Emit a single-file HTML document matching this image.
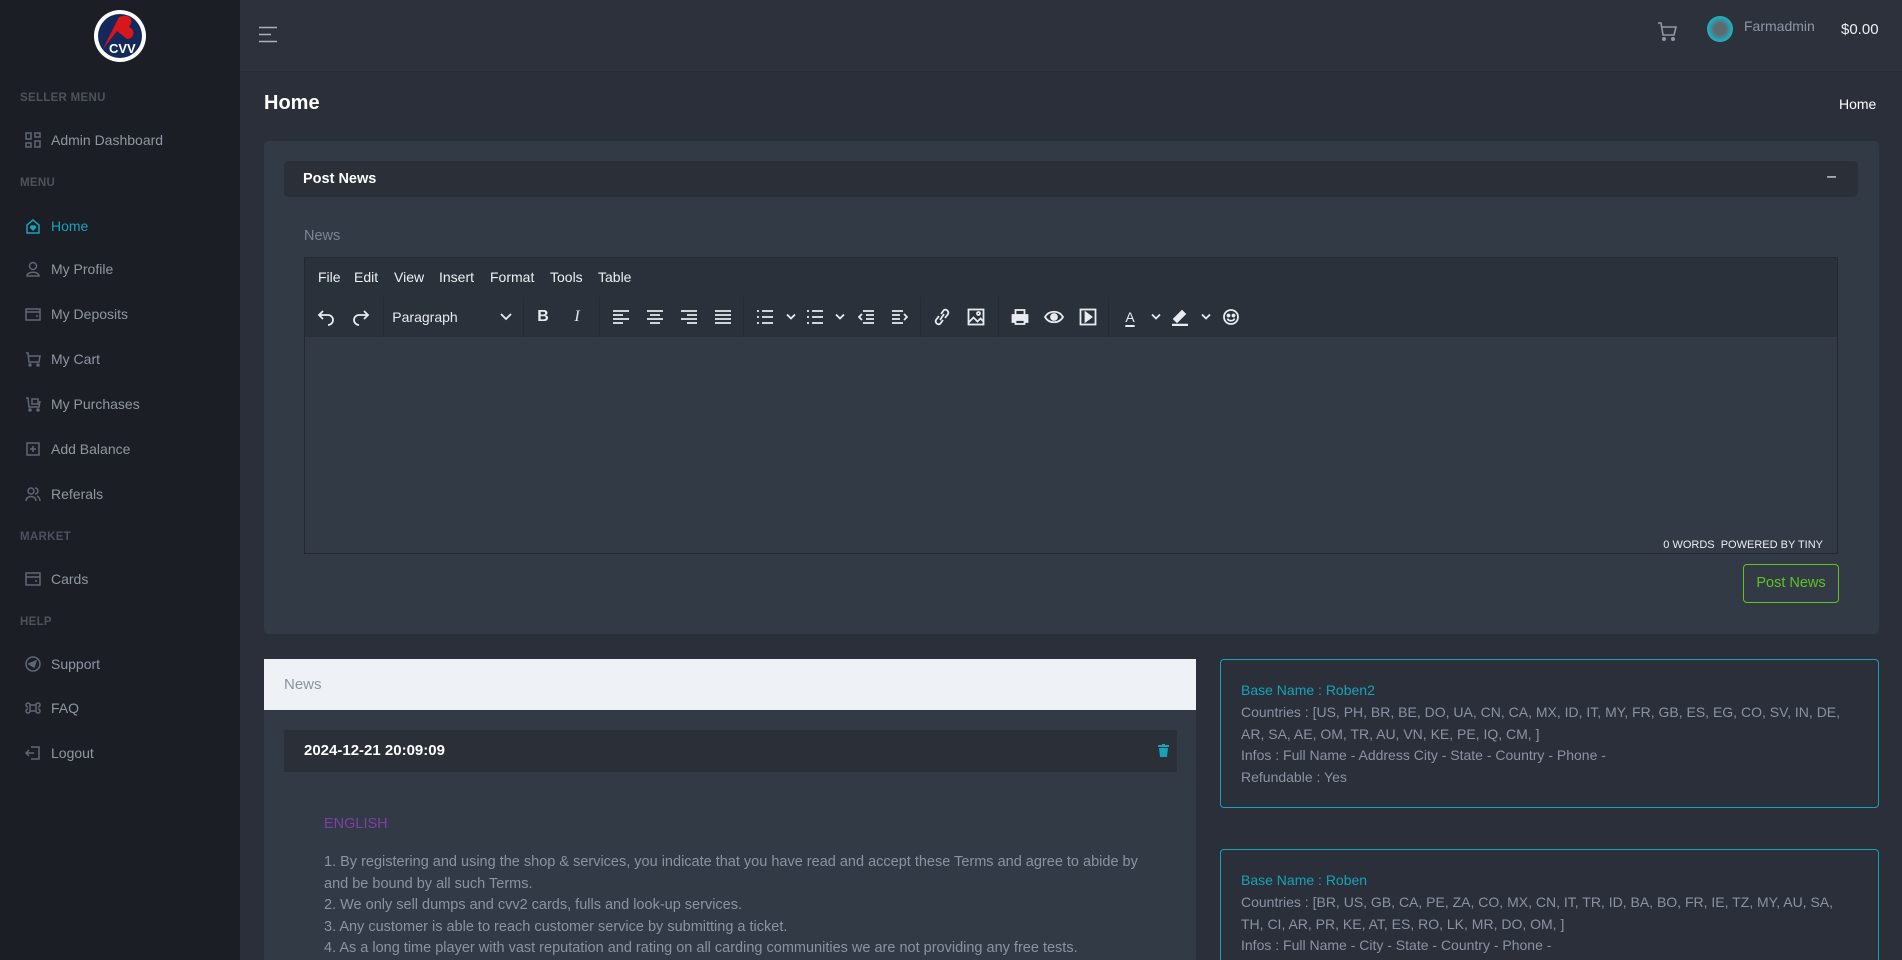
<!DOCTYPE html>
<html style="height:960px;overflow:hidden"><head><meta charset="utf-8"><style>
*{box-sizing:border-box;margin:0;padding:0}
body{width:1902px;height:960px;overflow:hidden;background:#2a2f39;font-family:"Liberation Sans",sans-serif;position:relative}
.a{position:absolute}
#sb{left:0;top:0;width:240px;height:960px;background:#1b1e25}
.lbl{position:absolute;left:20px;font-size:11.5px;font-weight:bold;color:#4c525e;letter-spacing:.3px}
.it{position:absolute;left:51px;font-size:14px;color:#8f97a6;transform:translateY(-50%)}
.ic{position:absolute;left:25px;width:16px;height:16px;transform:translateY(-50%)}
.ic svg{width:16px;height:16px;fill:none;stroke:#5f6675;stroke-width:1.5}
#hd{left:240px;top:0;width:1662px;height:71px;background:#2c313b;box-shadow:0 1px 0 #262a33}
.card{background:#323a46}
.tb span{position:absolute;top:50%;transform:translate(-50%,-50%);color:#e8ebef}
.tb svg{position:absolute;top:50%;transform:translate(-50%,-50%);fill:none;stroke:#e8ebef;stroke-width:1.8}
.sep{position:absolute;top:0;width:1px;height:40px;background:#262b33}
.txt{font-size:14.5px;color:#8a93a3;line-height:21.6px}
.bx{border:1px solid #17a2b8;border-radius:4px;padding:20px 20px;font-size:14px;line-height:21.8px;color:#8a93a3;overflow:hidden}
</style></head><body>
<div id="sb" class="a">
 <svg class="a" style="left:93px;top:9px" width="54" height="54" viewBox="0 0 54 54"><circle cx="27" cy="27" r="26" fill="#fff"/><circle cx="27" cy="27" r="22" fill="#14295a"/><path d="M10 40 L26 8 C36 4 42 10 36 18 C44 22 40 30 34 30 L24 22 Z" fill="#d8161b"/><text x="16" y="44" font-size="13" fill="#fff" font-family="Liberation Sans" font-weight="bold">CVV</text></svg>
 <div class="lbl" style="top:92px">SELLER MENU</div>
 <div class="ic" style="top:140px"><svg viewBox="0 0 16 16"><rect x="1" y="1" width="5" height="6"/><rect x="10" y="1" width="5" height="4"/><rect x="1" y="11" width="5" height="4"/><rect x="10" y="9" width="5" height="6"/></svg></div>
 <div class="it" style="top:140px">Admin Dashboard</div>
 <div class="lbl" style="top:177px">MENU</div>
 <div class="ic" style="top:226px"><svg viewBox="0 0 16 16" style="stroke:#17a2b8"><path d="M2 7 L8 2 L14 7 V15 H2 Z"/><path d="M8 12 L6 10 A1.2 1.2 0 0 1 8 8.5 A1.2 1.2 0 0 1 10 10 Z" fill="#17a2b8"/></svg></div>
 <div class="it" style="top:226px;color:#17a2b8">Home</div>
 <div class="ic" style="top:269px"><svg viewBox="0 0 16 16"><circle cx="8" cy="5" r="3.5"/><path d="M2 15 C2 10 14 10 14 15 Z"/></svg></div>
 <div class="it" style="top:269px">My Profile</div>
 <div class="ic" style="top:314px"><svg viewBox="0 0 16 16"><rect x="1" y="3" width="14" height="11"/><path d="M1 6 H15 M11 10 H13"/></svg></div>
 <div class="it" style="top:314px">My Deposits</div>
 <div class="ic" style="top:359px"><svg viewBox="0 0 16 16"><path d="M1 2 H3 L4 11 H14 L15 5 H4"/><circle cx="5" cy="14" r="1"/><circle cx="13" cy="14" r="1"/></svg></div>
 <div class="it" style="top:359px">My Cart</div>
 <div class="ic" style="top:404px"><svg viewBox="0 0 16 16"><path d="M1 2 H3 L4 11 H14 L15 5"/><rect x="7" y="3" width="6" height="5"/><circle cx="5" cy="14" r="1"/><circle cx="13" cy="14" r="1"/></svg></div>
 <div class="it" style="top:404px">My Purchases</div>
 <div class="ic" style="top:449px"><svg viewBox="0 0 16 16"><rect x="2" y="2" width="12" height="12"/><path d="M8 5 V11 M5 8 H11"/></svg></div>
 <div class="it" style="top:449px">Add Balance</div>
 <div class="ic" style="top:494px"><svg viewBox="0 0 16 16"><circle cx="6" cy="5" r="3"/><path d="M1 15 C1 9 11 9 11 15 M10 2 A3 3 0 0 1 10 8 M12 10 C14 11 15 13 15 15"/></svg></div>
 <div class="it" style="top:494px">Referals</div>
 <div class="lbl" style="top:531px">MARKET</div>
 <div class="ic" style="top:579px"><svg viewBox="0 0 16 16"><rect x="1" y="2" width="14" height="12"/><path d="M1 6 H15 M10 10 H12"/></svg></div>
 <div class="it" style="top:579px">Cards</div>
 <div class="lbl" style="top:616px">HELP</div>
 <div class="ic" style="top:664px"><svg viewBox="0 0 16 16"><circle cx="8" cy="8" r="7"/><path d="M4 8 L11 5 L9 11 Z" fill="#5f6675"/></svg></div>
 <div class="it" style="top:664px">Support</div>
 <div class="ic" style="top:708px"><svg viewBox="0 0 16 16"><path d="M5 5 H11 V11 H5 Z M5 5 A2 2 0 1 0 3 7 M11 5 A2 2 0 1 1 13 7 M5 11 A2 2 0 1 1 3 9 M11 11 A2 2 0 1 0 13 9"/></svg></div>
 <div class="it" style="top:708px">FAQ</div>
 <div class="ic" style="top:753px"><svg viewBox="0 0 16 16"><path d="M6 2 H14 V14 H6 M1 8 H9 M4 5 L1 8 L4 11"/></svg></div>
 <div class="it" style="top:753px">Logout</div>
</div>
<div id="hd" class="a">
 <svg class="a" style="left:18px;top:26px" width="20" height="17"><path d="M1 1.5 H19 M1 8.5 H13 M1 15.5 H19" stroke="#aab1bd" stroke-width="1.6"/></svg>
 <svg class="a" style="left:1416px;top:20px" width="22" height="22" viewBox="0 0 22 22" fill="none" stroke="#8f97a6" stroke-width="1.6"><path d="M2 3 H5 L7 15 H18 L20 7 H6"/><circle cx="8" cy="19" r="1.2" fill="#8f97a6"/><circle cx="17" cy="19" r="1.2" fill="#8f97a6"/></svg>
 <div class="a" style="left:1467px;top:16px;width:26px;height:26px;border-radius:50%;background:radial-gradient(circle,#5d6a6f 30%,#1bb6c7 70%,#0f3a44 100%)"></div>
 <div class="a" style="left:1504px;top:18px;font-size:14px;color:#8f97a6">Farmadmin</div>
 <div class="a" style="left:1601px;top:21px;font-size:15px;color:#eef0f3">$0.00</div>
</div>
<div class="a" style="left:264px;top:92px;font-size:20px;font-weight:bold;color:#fff">Home</div>
<div class="a" style="left:1839px;top:96px;font-size:14px;color:#fff">Home</div>

<div class="a card" style="left:264px;top:141px;width:1615px;height:493px;border-radius:5px">
 <div class="a" style="left:20px;top:20px;width:1574px;height:36px;background:#2a2f38;border-radius:5px">
  <div class="a" style="left:19px;top:10px;font-size:14.5px;font-weight:bold;color:#fff">Post News</div>
  <div class="a" style="right:22px;top:7px;font-size:16px;color:#fff">–</div>
 </div>
 <div class="a" style="left:40px;top:87px;font-size:14.5px;color:#7d8595">News</div>
 <div class="a" style="left:40px;top:116px;width:1534px;height:297px;border:1px solid #242830;background:#323a46">
  <div class="a" style="left:0;top:0;width:1532px;height:39px;background:#2b313b;font-size:14px;color:#eef0f3">
   <span class="a" style="left:13px;top:11px">File</span><span class="a" style="left:49px;top:11px">Edit</span><span class="a" style="left:89px;top:11px">View</span><span class="a" style="left:134px;top:11px">Insert</span><span class="a" style="left:185px;top:11px">Format</span><span class="a" style="left:245px;top:11px">Tools</span><span class="a" style="left:293px;top:11px">Table</span>
  </div>
  <div class="a tb" style="left:0;top:39px;width:1532px;height:40px;background:#2b313b">
   <svg style="left:21px" width="18" height="18" viewBox="0 0 18 18"><path d="M6 3 L2 7 L6 11 M2 7 H11 A5 5 0 0 1 11 17"/></svg>
   <svg style="left:56px" width="18" height="18" viewBox="0 0 18 18"><path d="M12 3 L16 7 L12 11 M16 7 H7 A5 5 0 0 0 7 17"/></svg>
   <div class="sep" style="left:78px"></div>
   <span style="left:120px;font-size:14px">Paragraph</span>
   <svg style="left:201px" width="12" height="8" viewBox="0 0 12 8"><path d="M1 1 L6 6 L11 1"/></svg>
   <div class="sep" style="left:218px"></div>
   <span style="left:238px;font-weight:bold;font-size:16px">B</span>
   <span style="left:272px;font-style:italic;font-size:16px;font-family:'Liberation Serif',serif">I</span>
   <div class="sep" style="left:294px"></div>
   <svg style="left:316px" width="16" height="14"><path d="M0 1H16M0 5H10M0 9H16M0 13H10"/></svg>
   <svg style="left:350px" width="16" height="14"><path d="M0 1H16M3 5H13M0 9H16M3 13H13"/></svg>
   <svg style="left:384px" width="16" height="14"><path d="M0 1H16M6 5H16M0 9H16M6 13H16"/></svg>
   <svg style="left:418px" width="16" height="14"><path d="M0 1H16M0 5H16M0 9H16M0 13H16"/></svg>
   <div class="sep" style="left:438px"></div>
   <svg style="left:460px" width="16" height="14"><path d="M0 1H2M5 1H16M0 7H2M5 7H16M0 13H2M5 13H16"/></svg>
   <svg style="left:486px" width="10" height="7"><path d="M1 1L5 5L9 1"/></svg>
   <svg style="left:510px" width="16" height="14"><path d="M0 1H2M5 1H16M0 7H2M5 7H16M0 13H2M5 13H16"/></svg>
   <svg style="left:535px" width="10" height="7"><path d="M1 1L5 5L9 1"/></svg>
   <svg style="left:561px" width="16" height="14"><path d="M5 1H16M8 5H16M8 9H16M5 13H16M4 4L1 7L4 10"/></svg>
   <svg style="left:595px" width="16" height="14"><path d="M0 1H11M0 5H8M0 9H8M0 13H11M12 4L15 7L12 10"/></svg>
   <div class="sep" style="left:615px"></div>
   <svg style="left:637px" width="16" height="18"><path d="M7 6 L10 2 A3 3 0 0 1 14 6 L11 10 M9 12 L6 16 A3 3 0 0 1 2 12 L5 8 M6 12 L10 6"/></svg>
   <svg style="left:671px" width="17" height="17"><rect x="1" y="1" width="15" height="15"/><path d="M1 14 L6 9 L10 13 L13 10 L16 13"/><circle cx="11" cy="5" r="1.5"/></svg>
   <div class="sep" style="left:693px"></div>
   <svg style="left:715px" width="17" height="16"><rect x="1" y="6" width="15" height="7" fill="#e8ebef"/><rect x="4" y="1" width="9" height="5"/><rect x="4" y="11" width="9" height="4" fill="#2b313b"/></svg>
   <svg style="left:749px" width="20" height="16"><path d="M1 8 C5 1 15 1 19 8 C15 15 5 15 1 8 Z"/><circle cx="10" cy="8" r="3" fill="#e8ebef"/></svg>
   <svg style="left:783px" width="17" height="17"><rect x="1" y="1" width="15" height="15"/><path d="M6 4 L12 8.5 L6 13 Z" fill="#e8ebef"/></svg>
   <div class="sep" style="left:803px"></div>
   <span style="left:825px;font-size:14px;text-decoration:underline;text-decoration-thickness:2px;text-underline-offset:3px">A</span>
   <svg style="left:851px" width="10" height="7"><path d="M1 1L5 5L9 1"/></svg>
   <svg style="left:875px" width="18" height="18"><path d="M5 13 L3 11 L11 3 L14 6 L6 14 Z" fill="#e8ebef"/><path d="M1 17 H17" stroke-width="2.5"/></svg>
   <svg style="left:901px" width="10" height="7"><path d="M1 1L5 5L9 1"/></svg>
   <svg style="left:926px" width="17" height="17"><circle cx="8.5" cy="8.5" r="7"/><circle cx="6" cy="7" r="1" fill="#e8ebef"/><circle cx="11" cy="7" r="1" fill="#e8ebef"/><path d="M5 10 C6 13 11 13 12 10"/></svg>
  </div>
  <div class="a" style="right:14px;bottom:2px;font-size:11px;color:#eef0f3">0 WORDS&nbsp; POWERED BY TINY</div>
 </div>
 <div class="a" style="left:1479px;top:423px;width:96px;height:39px;border:1.5px solid #5fc320;border-radius:4px;color:#5fc320;font-size:14.5px;text-align:center;line-height:36px">Post News</div>
</div>

<div class="a card" style="left:264px;top:659px;width:932px;height:301px;overflow:hidden">
 <div class="a" style="left:0;top:0;width:932px;height:51px;background:#eef2f6"><div class="a" style="left:20px;top:17px;font-size:15px;color:#8a93a3">News</div></div>
 <div class="a" style="left:20px;top:71px;width:893px;height:42px;background:#2a2f38">
  <div class="a" style="left:20px;top:12px;font-size:15px;font-weight:bold;color:#fff">2024-12-21 20:09:09</div>
  <svg class="a" style="left:874px;top:14px" width="11" height="13" viewBox="0 0 11 13" fill="#17a2b8"><rect x="0" y="1" width="11" height="2"/><rect x="4" y="0" width="3" height="1"/><path d="M1 4 H10 L9 13 H2 Z"/></svg>
 </div>
 <div class="a" style="left:60px;top:157px;font-size:14.5px;color:#7f3fa8">ENGLISH</div>
 <div class="a txt" style="left:60px;top:193px;width:830px">1. By registering and using the shop &amp; services, you indicate that you have read and accept these Terms and agree to abide by and be bound by all such Terms.<br>2. We only sell dumps and cvv2 cards, fulls and look-up services.<br>3. Any customer is able to reach customer service by submitting a ticket.<br>4. As a long time player with vast reputation and rating on all carding communities we are not providing any free tests.</div>
</div>

<div class="a bx" style="left:1220px;top:659px;width:659px;height:149px"><span style="color:#17a2b8">Base Name : Roben2</span><br>Countries : [US, PH, BR, BE, DO, UA, CN, CA, MX, ID, IT, MY, FR, GB, ES, EG, CO, SV, IN, DE, AR, SA, AE, OM, TR, AU, VN, KE, PE, IQ, CM, ]<br>Infos : Full Name - Address City - State - Country - Phone -<br>Refundable : Yes</div>
<div class="a bx" style="left:1220px;top:849px;width:659px;height:130px"><span style="color:#17a2b8">Base Name : Roben</span><br>Countries : [BR, US, GB, CA, PE, ZA, CO, MX, CN, IT, TR, ID, BA, BO, FR, IE, TZ, MY, AU, SA, TH, CI, AR, PR, KE, AT, ES, RO, LK, MR, DO, OM, ]<br>Infos : Full Name - City - State - Country - Phone -</div>
</body></html>
